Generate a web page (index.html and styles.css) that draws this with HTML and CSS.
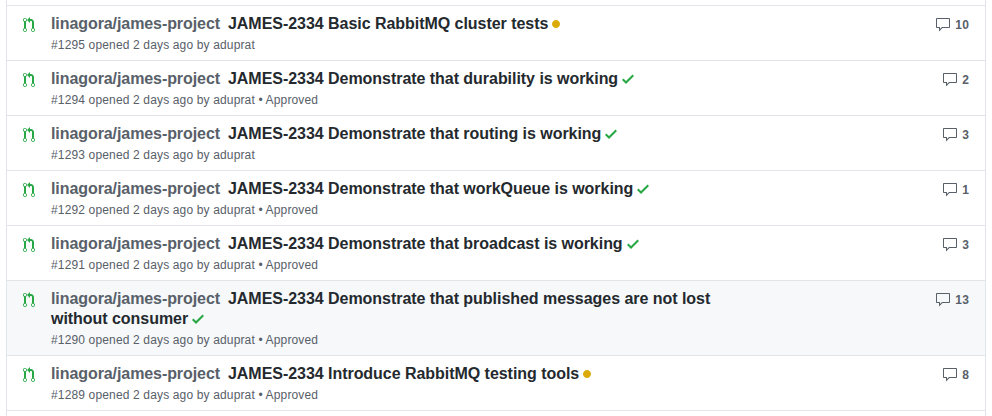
FILE: index.html
```html
<!DOCTYPE html>
<html lang="en"><head><meta charset="utf-8"><title>Pull requests</title><link rel="stylesheet" href="styles.css"></head>
<body>
<svg class="defs" width="0" height="0"><defs>
<symbol id="pr" viewBox="0 0 12 16"><path fill-rule="evenodd" d="M11 11.28V5c-.03-.78-.34-1.47-.94-2.06C9.46 2.35 8.78 2.03 8 2H7V0L4 3l3 3V4h1c.27.02.48.11.69.31.21.2.3.42.31.69v6.28A1.993 1.993 0 0 0 10 15a1.993 1.993 0 0 0 1-3.72zm-1 2.92c-.66 0-1.2-.55-1.2-1.2 0-.65.55-1.2 1.2-1.2.65 0 1.2.55 1.2 1.2 0 .65-.55 1.2-1.2 1.2zM4 3c0-1.11-.89-2-2-2a1.993 1.993 0 0 0-1 3.72v6.56A1.993 1.993 0 0 0 2 15a1.993 1.993 0 0 0 1-3.72V4.72c.59-.34 1-.98 1-1.72zm-.8 10c0 .66-.55 1.2-1.2 1.2-.65 0-1.2-.55-1.2-1.2 0-.65.55-1.2 1.2-1.2.65 0 1.2.55 1.2 1.2zM2 4.2C1.34 4.2.8 3.65.8 3c0-.65.55-1.2 1.2-1.2.65 0 1.2.55 1.2 1.2 0 .65-.55 1.2-1.2 1.2z"/></symbol>
<symbol id="check" viewBox="0 0 12 16"><path d="M12 5l-8 8-4-4 1.500-1.500L4 10l6.500-6.500z"/></symbol>
<symbol id="dot" viewBox="0 0 8 16"><path d="M0 8c0-2.200 1.800-4 4-4s4 1.800 4 4-1.800 4-4 4-4-1.800-4-4z"/></symbol>
<symbol id="comment" viewBox="0 0 16 16"><path fill-rule="evenodd" d="M14 1H2c-.55 0-1 .45-1 1v8c0 .55.45 1 1 1h2v3.500L7.500 11H14c.55 0 1-.45 1-1V2c0-.55-.45-1-1-1zm0 9H7l-2 2v-2H2V2h12v8z"/></symbol>
</defs></svg>
<ul class="list">
<li class="row"><svg class="pr"><use href="#pr"/></svg><div class="main"><div class="title"><a class="repo">linagora/james-project</a> <a>JAMES-2334 Basic RabbitMQ cluster tests</a> <svg class="dot"><use href="#dot"/></svg></div><div class="meta">#1295 opened 2 days ago by aduprat</div></div><div class="comments"><svg><use href="#comment"/></svg><span>10</span></div></li>
<li class="row"><svg class="pr"><use href="#pr"/></svg><div class="main"><div class="title"><a class="repo">linagora/james-project</a> <a>JAMES-2334 Demonstrate that durability is working</a> <svg class="check"><use href="#check"/></svg></div><div class="meta">#1294 opened 2 days ago by aduprat • Approved</div></div><div class="comments"><svg><use href="#comment"/></svg><span>2</span></div></li>
<li class="row"><svg class="pr"><use href="#pr"/></svg><div class="main"><div class="title"><a class="repo">linagora/james-project</a> <a>JAMES-2334 Demonstrate that routing is working</a> <svg class="check"><use href="#check"/></svg></div><div class="meta">#1293 opened 2 days ago by aduprat</div></div><div class="comments"><svg><use href="#comment"/></svg><span>3</span></div></li>
<li class="row"><svg class="pr"><use href="#pr"/></svg><div class="main"><div class="title"><a class="repo">linagora/james-project</a> <a>JAMES-2334 Demonstrate that workQueue is working</a> <svg class="check"><use href="#check"/></svg></div><div class="meta">#1292 opened 2 days ago by aduprat • Approved</div></div><div class="comments"><svg><use href="#comment"/></svg><span>1</span></div></li>
<li class="row"><svg class="pr"><use href="#pr"/></svg><div class="main"><div class="title"><a class="repo">linagora/james-project</a> <a>JAMES-2334 Demonstrate that broadcast is working</a> <svg class="check"><use href="#check"/></svg></div><div class="meta">#1291 opened 2 days ago by aduprat • Approved</div></div><div class="comments"><svg><use href="#comment"/></svg><span>3</span></div></li>
<li class="row hover"><svg class="pr"><use href="#pr"/></svg><div class="main"><div class="title"><a class="repo">linagora/james-project</a> <a>JAMES-2334 Demonstrate that published messages are not lost without consumer</a> <svg class="check"><use href="#check"/></svg></div><div class="meta">#1290 opened 2 days ago by aduprat • Approved</div></div><div class="comments"><svg><use href="#comment"/></svg><span>13</span></div></li>
<li class="row"><svg class="pr"><use href="#pr"/></svg><div class="main"><div class="title"><a class="repo">linagora/james-project</a> <a>JAMES-2334 Introduce RabbitMQ testing tools</a> <svg class="dot"><use href="#dot"/></svg></div><div class="meta">#1289 opened 2 days ago by aduprat • Approved</div></div><div class="comments"><svg><use href="#comment"/></svg><span>8</span></div></li>
<li class="row last"></li>
</ul>
</body></html>
```
FILE: styles.css
```css
* { box-sizing: border-box; }
body { margin: 0; background: #fff; color: #24292e; font-family: "Liberation Sans", Arial, sans-serif; }
.defs { display: block; }
.list { list-style: none; height: 416px; margin: 0 6px; padding: 5px 0 0; border: solid #e1e4e8; border-width: 0 1px; }
.row { display: flex; height: 55px; padding: 8px 16px 0 15px; border-top: 1px solid #e1e4e8; }
.hover { height: 75px; background: #f6f8fa; }
.last { height: 6px; padding: 0; }
.pr { width: 12px; height: 16px; margin: 3px 16px 0 1px; fill: #28a745; flex: none; }
.main { width: 686px; }
.title { font-size: 16px; font-weight: 600; line-height: 20px; letter-spacing: -0.04px; }
.repo { color: #586069; margin-right: 3.6px; letter-spacing: -0.08px; }
.title svg { height: 16px; vertical-align: text-bottom; margin-left: -0.3px; }
.check { width: 12px; fill: #28a745; }
.dot { width: 8px; fill: #dbab09; }
.meta { font-size: 12px; line-height: 18px; margin-top: 2px; color: #586069; letter-spacing: 0.15px; }
.comments { display: flex; align-items: flex-start; margin-left: auto; color: #586069; font-size: 12px; font-weight: 700; line-height: 18px; padding-top: 2px; }
.comments svg { width: 16px; height: 16px; margin: 1px 4.5px 0 0; fill: #586069; }
.comments span { letter-spacing: 0.15px; }
```
